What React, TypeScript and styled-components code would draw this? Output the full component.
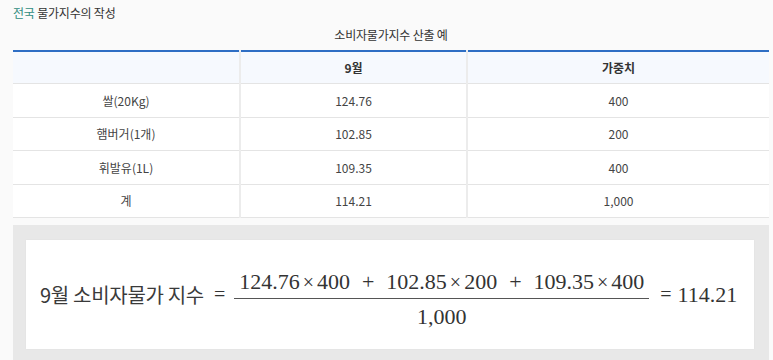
import React from "react";
import styled, { createGlobalStyle } from "styled-components";

const Global = createGlobalStyle`
  html, body { margin: 0; padding: 0; background: #fafafa; }
  body { font-family: "Noto Sans CJK KR", "Noto Sans", sans-serif; color: #333; }
`;

const Page = styled.div`
  width: 756px;
  margin-left: 13px;
  overflow: hidden;
  height: 360px;
`;

const Title = styled.h3`
  margin: 0;
  padding-top: 5px;
  font-size: 12px;
  line-height: 16px;
  font-weight: 400;
  color: #333;
  letter-spacing: -0.2px;
`;

const Accent = styled.span`
  color: #2f8c80;
`;

const Caption = styled.div`
  margin: 6px 0 7px;
  text-align: center;
  font-size: 12px;
  line-height: 16px;
  color: #333;
  letter-spacing: -0.2px;
`;

const Table = styled.table`
  width: 100%;
  border-collapse: collapse;
  table-layout: fixed;
  background: #fff;
  border-top: 2px solid #2e6ec4;
`;

const Col = styled.col<{ $w: number }>`
  width: ${(p) => p.$w}px;
`;

const Th = styled.th<{ $first?: boolean }>`
  height: 31px;
  padding: 0;
  background: #f6f9fe;
  font-size: 12px;
  font-weight: 700;
  color: #333;
  text-align: center;
  border-bottom: 1px solid #e4e4e4;
  border-left: ${(p) => (p.$first ? "none" : "2px solid #ececec")};
`;

const Td = styled.td<{ $first?: boolean }>`
  height: 32.5px;
  padding: 0;
  font-size: 12px;
  color: #444;
  text-align: center;
  border-bottom: 1px solid #e4e4e4;
  border-left: ${(p) => (p.$first ? "none" : "2px solid #ececec")};
`;

const Panel = styled.div`
  margin-top: 7px;
  background: #e8e8e8;
  padding: 15px 15px 11px 13px;
`;

const Card = styled.div`
  height: 109px;
  background: #fff;
  display: flex;
  align-items: center;
  padding-left: 14px;
  color: #333;
  box-shadow: 0 0 2px rgba(0, 0, 0, 0.04);
`;

const Label = styled.span`
  font-family: "Noto Sans CJK KR", sans-serif;
  font-size: 20px;
  letter-spacing: -0.3px;
  color: #3a3a3a;
`;

const Serif = styled.span`
  font-family: "Liberation Serif", "Times New Roman", serif;
  font-size: 22px;
  color: #333;
`;

const Eq = styled(Serif)<{ $l: number; $r: number }>`
  font-size: 20px;
  margin: 0 ${(p) => p.$r}px 0 ${(p) => p.$l}px;
`;

const Fraction = styled.div`
  display: flex;
  flex-direction: column;
  align-items: center;
  width: 415px;
  margin-top: 10px;
`;

const Numerator = styled(Serif)`
  line-height: 24px;
  padding-bottom: 4px;
  white-space: nowrap;
`;

const Bar = styled.div`
  width: 100%;
  height: 1px;
  background: #555;
`;

const Denominator = styled(Serif)`
  line-height: 24px;
  padding-top: 6px;
`;

const Times = styled.span`
  margin: 0 3px;
  font-size: 20px;
`;

const Plus = styled.span`
  margin: 0 12px;
`;

const Result = styled(Serif)`
  font-size: 22px;
`;

const rows = [
  { name: "쌀(20Kg)", v: "124.76", w: "400" },
  { name: "햄버거(1개)", v: "102.85", w: "200" },
  { name: "휘발유(1L)", v: "109.35", w: "400" },
  { name: "계", v: "114.21", w: "1,000" },
];

const terms = [
  ["124.76", "400"],
  ["102.85", "200"],
  ["109.35", "400"],
];

export default function App() {
  return (
    <>
      <Global />
      <Page>
        <Title>
          <Accent>전국</Accent> 물가지수의 작성
        </Title>
        <Caption>소비자물가지수 산출 예</Caption>
        <Table>
          <colgroup>
            <Col $w={227} />
            <Col $w={227} />
            <Col $w={302} />
          </colgroup>
          <thead>
            <tr>
              <Th $first></Th>
              <Th>9월</Th>
              <Th>가중치</Th>
            </tr>
          </thead>
          <tbody>
            {rows.map((r) => (
              <tr key={r.name}>
                <Td $first>{r.name}</Td>
                <Td>{r.v}</Td>
                <Td>{r.w}</Td>
              </tr>
            ))}
          </tbody>
        </Table>
        <Panel>
          <Card>
            <Label>9월 소비자물가 지수</Label>
            <Eq $l={10} $r={9}>=</Eq>
            <Fraction>
              <Numerator>
                {terms.map((t, i) => (
                  <React.Fragment key={i}>
                    {i > 0 && <Plus>+</Plus>}
                    {t[0]}
                    <Times>×</Times>
                    {t[1]}
                  </React.Fragment>
                ))}
              </Numerator>
              <Bar />
              <Denominator>1,000</Denominator>
            </Fraction>
            <Eq $l={11} $r={6}>=</Eq>
            <Result>114.21</Result>
          </Card>
        </Panel>
      </Page>
    </>
  );
}
